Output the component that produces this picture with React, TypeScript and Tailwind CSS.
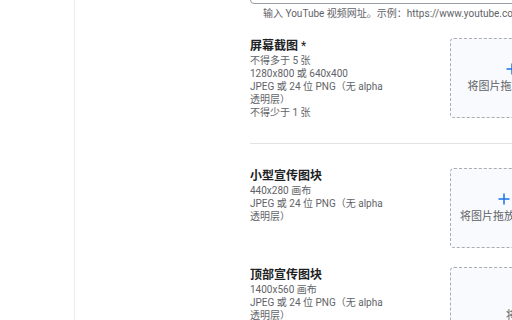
const font = { fontFamily: 'Roboto, "Noto Sans CJK SC", sans-serif' };

type Asset = {
  title: string;
  required?: boolean;
  lines: string[];
  boxClass: string;
};

const assets: Asset[] = [
  {
    title: "屏幕截图",
    required: true,
    lines: ["不得多于 5 张", "1280x800 或 640x400", "JPEG 或 24 位 PNG（无 alpha 透明层）", "不得少于 1 张"],
    boxClass: "w-[123px]",
  },
  {
    title: "小型宣传图块",
    lines: ["440x280 画布", "JPEG 或 24 位 PNG（无 alpha 透明层）"],
    boxClass: "w-[108px]",
  },
  {
    title: "顶部宣传图块",
    lines: ["1400x560 画布", "JPEG 或 24 位 PNG（无 alpha 透明层）"],
    boxClass: "w-[200px]",
  },
];

function DropZone({ className }: { className: string }) {
  return (
    <div
      className={`flex h-[80px] shrink-0 flex-col items-center justify-center gap-[5px] rounded-[4px] border border-dashed border-[#a9adb3] bg-[#f8fafd] ${className}`}
    >
      <svg width="12" height="12" viewBox="0 0 12 12" className="shrink-0">
        <path d="M6 0.5v11M0.5 6h11" stroke="#1a73e8" strokeWidth="1.5" fill="none" />
      </svg>
      <span className="whitespace-nowrap text-[11px] leading-[14px] text-[#5f6368]">将图片拖放到此处</span>
    </div>
  );
}

function AssetRow({ asset }: { asset: Asset }) {
  return (
    <div className="flex items-start">
      <div className="w-[200px] shrink-0">
        <div className="text-[12px] font-bold leading-[16px] text-[#202124]">
          {asset.title}
          {asset.required && <span className="font-normal"> *</span>}
        </div>
        <div className="max-w-[140px] text-[10px] leading-[13px] text-[#5f6368]">
          {asset.lines.map((l) => (
            <div key={l}>{l}</div>
          ))}
        </div>
      </div>
      <DropZone className={asset.boxClass} />
    </div>
  );
}

export default function App() {
  return (
    <div className="flex h-[320px] w-[512px] overflow-hidden bg-white" style={font}>
      <aside className="w-[75px] shrink-0 border-r border-[#ececec] bg-white" />
      <main className="min-w-0 flex-1 pl-[175px]">
        <div className="-mt-[33px] w-[400px]">
          <div className="h-[37px] rounded-[4px] border border-[#9aa0a6]" />
          <p className="mt-[3px] whitespace-nowrap pl-[13px] text-[10px] leading-[13px] text-[#5f6368]">
            输入 YouTube 视频网址。示例：https://www.youtube.com/watch?v=xxxxxxxx
          </p>
        </div>

        <div className="mt-[18px] w-[400px]">
          <AssetRow asset={assets[0]} />
          <div className="my-[24px] h-px bg-[#e3e3e3]" />
          <AssetRow asset={assets[1]} />
          <div className="h-[19px]" />
          <AssetRow asset={assets[2]} />
        </div>
      </main>
    </div>
  );
}
